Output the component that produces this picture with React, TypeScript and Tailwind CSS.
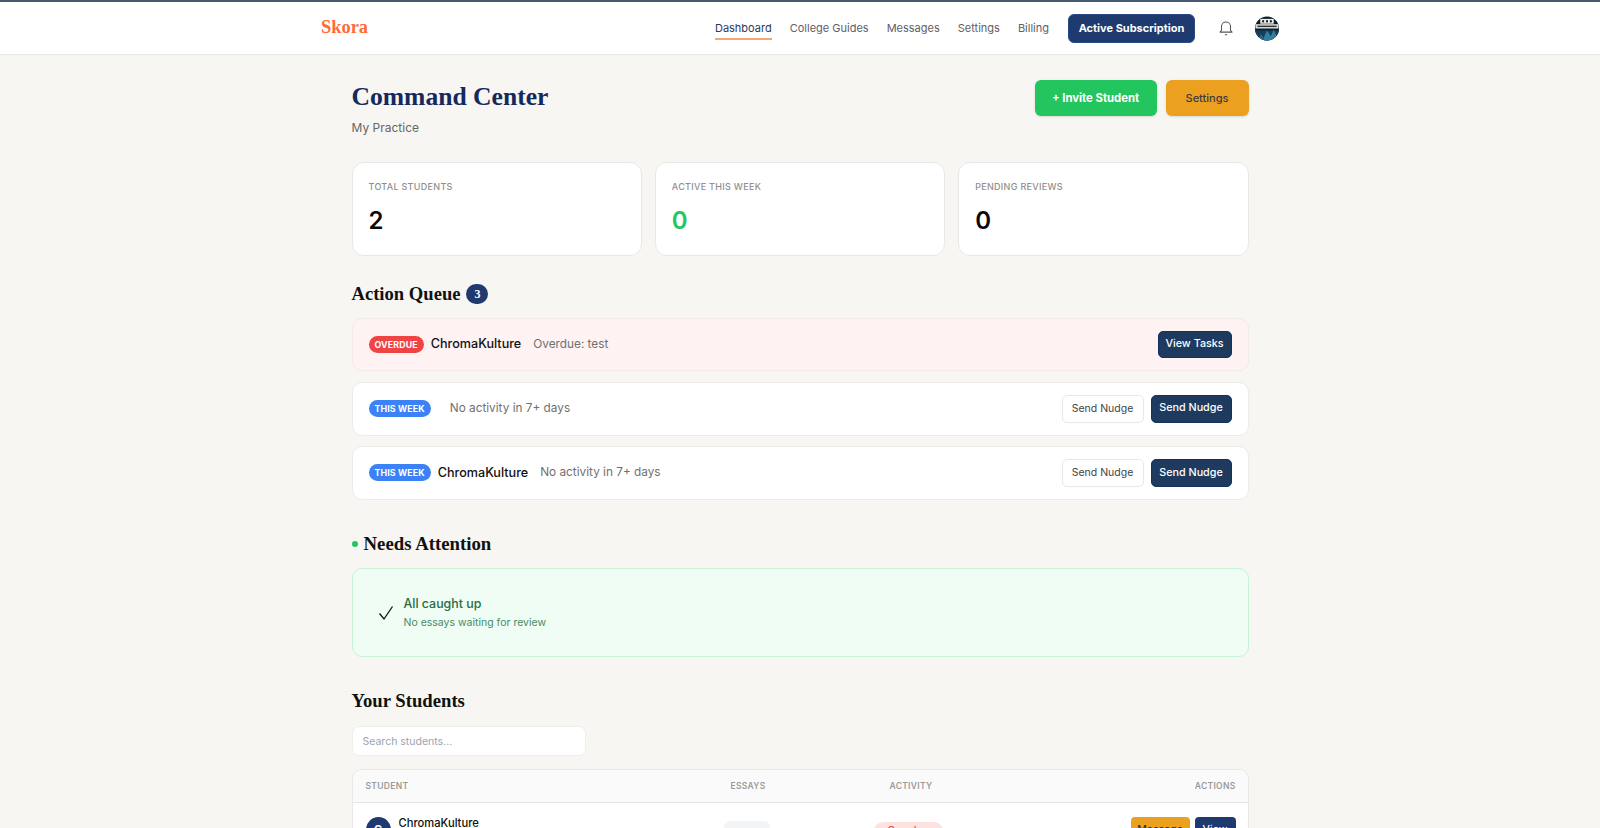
const serif = "font-['Georgia','Liberation_Serif',serif]";

function Chip({ tone, children }: { tone: "red" | "blue"; children: string }) {
  return (
    <span className={`flex h-[17px] shrink-0 items-center rounded-full px-[6px] text-[8.8px] font-bold tracking-[0.15px] text-white ${tone === "red" ? "bg-[#ef4444]" : "bg-[#3b82f6]"}`}>
      {children}
    </span>
  );
}

function DarkBtn({ children, className = "" }: { children: string; className?: string }) {
  return (
    <button className={`rounded-[5px] border border-[#16305f] bg-[#1e3a5f] text-[10.75px] font-medium text-white ${className}`}>
      {children}
    </button>
  );
}

function QueueRow({ chip, tone, name, text, nudge }: { chip: string; tone: "red" | "blue"; name?: string; text: string; nudge?: boolean }) {
  return (
    <div className={`flex items-center justify-between rounded-[10px] border pl-4 pr-4 ${nudge ? "h-[54px] border-[#ebebe8] bg-white" : "h-[53px] border-[#f3e9e7] bg-[#fef2f2]"}`}>
      <div className="flex items-center">
        <Chip tone={tone}>{chip}</Chip>
        <span className="ml-[7px] text-[12.6px] font-medium text-[#111]">{name}</span>
        <span className="ml-3 text-[11.8px] text-[#707070]">{text}</span>
      </div>
      {nudge ? (
        <div className="flex items-center gap-[7px]">
          <button className="h-[28px] w-[82px] rounded-[5px] border border-[#e8e8e6] bg-white text-[10.5px] text-[#444]">Send Nudge</button>
          <DarkBtn className="h-[28px] w-[81px]">Send Nudge</DarkBtn>
        </div>
      ) : (
        <DarkBtn className="h-[27px] w-[74px]">View Tasks</DarkBtn>
      )}
    </div>
  );
}

function Stat({ label, value, color }: { label: string; value: string; color: string }) {
  return (
    <div className="h-[94px] rounded-[12px] border border-[#e8e8e6] bg-white px-[16px] pt-[18px]">
      <div className="text-[9px] font-medium uppercase leading-3 tracking-[0.3px] text-[#8f8f8f]">{label}</div>
      <div className={`mt-[12px] text-[24px] font-semibold leading-8 ${color}`}>{value}</div>
    </div>
  );
}

function Avatar() {
  return (
    <svg viewBox="0 0 26 26" className="h-[25px] w-[26px] shrink-0">
      <defs>
        <clipPath id="av"><circle cx="13" cy="13" r="12.5" /></clipPath>
      </defs>
      <g clipPath="url(#av)">
        <rect width="26" height="26" fill="#0d1f2b" />
        <rect y="15" width="26" height="11" fill="#173f5a" />
        <path d="M8 26 L13 15 L17 21 L20 14 L25 26 Z" fill="#2f7fa0" />
        <path d="M2 26 L7 19 L11 26 Z" fill="#2a6a88" />
        <rect x="6" y="3" width="14" height="5" fill="#eee" />
        <rect x="1" y="8.5" width="24" height="4.5" fill="#ddd" />
        <rect x="8" y="4.4" width="2" height="2.2" fill="#111" />
        <rect x="12" y="4.4" width="2" height="2.2" fill="#111" />
        <rect x="16" y="4.4" width="2" height="2.2" fill="#111" />
        <rect x="3" y="10" width="20" height="1.5" fill="#333" />
      </g>
    </svg>
  );
}

export default function App() {
  return (
    <div className="h-[828px] overflow-hidden bg-[#f7f6f3] font-['Inter','Liberation_Sans',sans-serif]">
      <header className="h-[55px] border-t-2 border-b border-t-[#475a6e] border-b-[#e8e8e6] bg-white">
        <div className="mx-auto flex h-full w-[960px] items-center justify-between">
          <span className={`${serif} ml-px text-[18.4px] font-bold text-[#ff6b35]`}>Skora</span>
          <nav className="flex items-center text-[11px] text-[#5f6066]">
            <a className="relative mr-[18px] text-[#2c3a5c]">
              Dashboard
              <span className="absolute -bottom-[4px] left-0 h-[2px] w-full bg-[#f9a66c]" />
            </a>
            <a className="mr-[18px]">College Guides</a>
            <a className="mr-[18px]">Messages</a>
            <a className="mr-[18px]">Settings</a>
            <a className="mr-[19px]">Billing</a>
            <button className="mr-[22px] h-[29px] w-[127px] rounded-[6px] border border-[#2a4a86] bg-[#1e3a6e] text-[11px] font-bold text-white">Active Subscription</button>
            <svg viewBox="0 0 24 24" className="mr-[19px] h-[18px] w-[18px]" fill="none" stroke="#555" strokeWidth="1.4" strokeLinecap="round" strokeLinejoin="round">
              <path d="M18 15V10a6 6 0 0 0-12 0v5l-2 2.5h16z" />
              <path d="M11 21h2" />
            </svg>
            <Avatar />
          </nav>
        </div>
      </header>

      <main className="mx-auto w-[897px]">
        <div className="flex justify-between pt-6">
          <div>
            <h1 className={`${serif} mt-[2px] text-[25.6px] font-bold leading-8 text-[#14295c]`}>Command Center</h1>
            <p className="mt-[5px] text-[12px] leading-5 text-[#666]">My Practice</p>
          </div>
          <div className="mt-px flex gap-[9px]">
            <button className="h-[36px] w-[122px] rounded-[6px] bg-[#22c55e] text-[11.3px] font-bold text-white shadow-sm">+ Invite Student</button>
            <button className="h-[36px] w-[83px] rounded-[6px] bg-[#eca020] text-[11px] font-medium text-[#3d3a40] shadow-sm">Settings</button>
          </div>
        </div>

        <div className="mt-[24px] grid grid-cols-3 gap-[13px]">
          <Stat label="Total Students" value="2" color="text-[#0a0a0a]" />
          <Stat label="Active This Week" value="0" color="text-[#22c55e]" />
          <Stat label="Pending Reviews" value="0" color="text-[#0a0a0a]" />
        </div>

        <div className="mt-[27px] flex items-center">
          <h2 className={`${serif} text-[18.6px] font-bold leading-[22px] text-[#111]`}>Action Queue</h2>
          <span className={`${serif} ml-[6px] flex h-[20px] w-[22px] items-center justify-center rounded-full bg-[#1e3a6e] text-[12px] font-bold text-white`}>3</span>
        </div>

        <div className="mt-[13px] flex flex-col gap-[10.5px]">
          <QueueRow chip="OVERDUE" tone="red" name="ChromaKulture" text="Overdue: test" />
          <QueueRow chip="THIS WEEK" tone="blue" text="No activity in 7+ days" nudge />
          <QueueRow chip="THIS WEEK" tone="blue" name="ChromaKulture" text="No activity in 7+ days" nudge />
        </div>

        <div className="mt-[33px] flex items-center">
          <span className="mr-[6px] h-[6px] w-[6px] rounded-full bg-[#22c55e]" />
          <h2 className={`${serif} text-[18.8px] font-bold leading-[22px] text-[#111]`}>Needs Attention</h2>
        </div>

        <div className="mt-[13px] flex h-[89px] items-center rounded-[10px] border border-[#c6f3d6] bg-[#effdf4] pl-[25px]">
          <svg viewBox="0 0 16 16" className="h-[16px] w-[16px]" fill="none" stroke="#111" strokeWidth="1.3">
            <path d="M1.5 8.5 L6 14 L14.5 1.5" />
          </svg>
          <div className="ml-[10px] mt-[2px]">
            <div className="text-[12.4px] font-medium leading-4 text-[#2b6a45]">All caught up</div>
            <div className="mt-[3px] text-[10.5px] leading-4 text-[#4a8a62]">No essays waiting for review</div>
          </div>
        </div>

        <h2 className={`${serif} mt-[33px] text-[18.7px] font-bold leading-[22px] text-[#111]`}>Your Students</h2>

        <input placeholder="Search students..." className="mt-[14px] block h-[30px] w-[234px] rounded-[7px] border border-[#eeeeec] bg-white px-[10px] text-[10.5px] placeholder:text-[#9ca3af]" />

        <div className="mt-[13px] rounded-t-[10px] border border-[#e8e8e6] bg-white">
          <div className="grid h-[33px] grid-cols-[365px_159px_1fr_auto] items-center rounded-t-[10px] border-b border-[#e5e5e3] bg-[#fafafa] pl-[13px] pr-3 text-[8.5px] font-semibold uppercase tracking-[0.3px] text-[#9a9a9a]">
            <span>Student</span>
            <span>Essays</span>
            <span>Activity</span>
            <span>Actions</span>
          </div>
          <div className="flex h-[60px] items-start pl-[13px] pr-3 pt-[14px]">
            <span className="flex h-[25px] w-[25px] items-center justify-center rounded-full bg-[#1e3a6e] text-[11px] font-bold text-white">C</span>
            <span className="ml-2 -mt-[2px] w-[325px] text-[11.2px] font-medium leading-4 text-[#111]">ChromaKulture</span>
            <span className="mt-[4px] h-[24px] w-[46px] rounded-[6px] bg-[#f3f4f6]" />
            <span className="ml-[103px] mt-[5px] flex h-[22px] w-[71px] justify-center rounded-full bg-[#fee2e2] pt-px text-[10px] font-medium text-[#ef4444]">Overdue</span>
            <span className="ml-auto flex gap-[5px]">
              <button className="h-[26px] w-[59px] rounded-[4px] bg-[#eca020] text-[10.5px] font-medium text-[#333]">Message</button>
              <button className="h-[26px] w-[41px] rounded-[4px] bg-[#1e3a6e] text-[10.5px] font-medium text-white">View</button>
            </span>
          </div>
        </div>
      </main>
    </div>
  );
}
